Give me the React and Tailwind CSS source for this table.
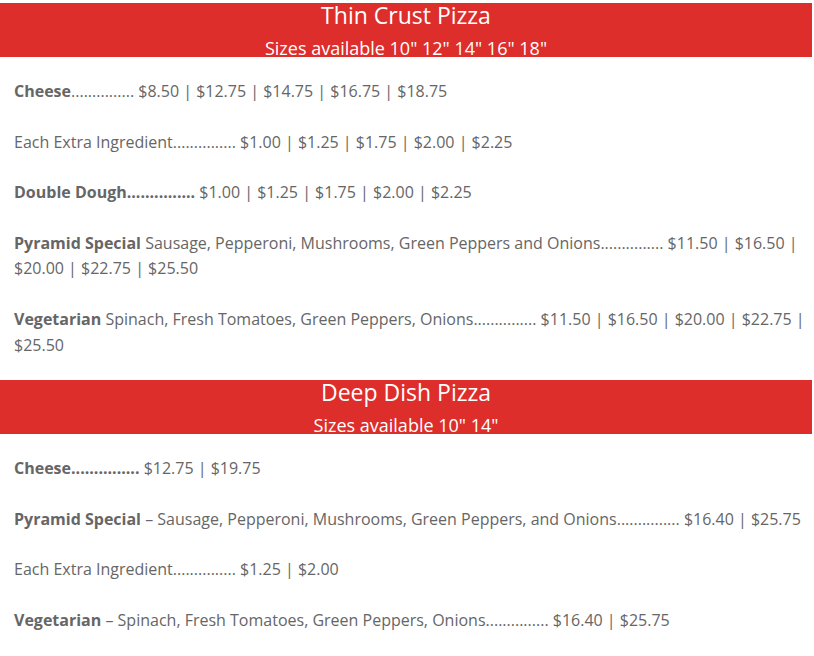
import React from "react";

const Bar = ({ title, sizes }) => (
  <div className="h-[54px] bg-[#dd2e2b] text-white text-center flex flex-col">
    <div className="text-[23px] leading-[24px]">{title}</div>
    <div className="text-[18px] leading-[20px] mt-[11px]">{sizes}</div>
  </div>
);

const D = "...............";

export default function App() {
  return (
    <div className="w-[812px] bg-white pt-[3px] text-[#666666]" style={{ fontFamily: '"Open Sans", sans-serif' }}>
      <Bar title="Thin Crust Pizza" sizes={'Sizes available 10" 12" 14" 16" 18"'} />
      <div className="pl-[14px] pr-[2px] pt-[22px] pb-[21.6px] flex flex-col gap-[25px] text-[16px] leading-[25.6px]">
        <p><b>Cheese</b>{D} $8.50 | $12.75 | $14.75 | $16.75 | $18.75</p>
        <p>Each Extra Ingredient{D} $1.00 | $1.25 | $1.75 | $2.00 | $2.25</p>
        <p><b>Double Dough{D}</b> $1.00 | $1.25 | $1.75 | $2.00 | $2.25</p>
        <p><b>Pyramid Special</b> Sausage, Pepperoni, Mushrooms, Green Peppers and Onions{D} $11.50 | $16.50 | $20.00 | $22.75 | $25.50</p>
        <p><b>Vegetarian</b> Spinach, Fresh Tomatoes, Green Peppers, Onions{D} $11.50 | $16.50 | $20.00 | $22.75 | $25.50</p>
      </div>
      <Bar title="Deep Dish Pizza" sizes={'Sizes available 10" 14"'} />
      <div className="pl-[14px] pr-[2px] pt-[22.2px] pb-[23px] flex flex-col gap-[25px] text-[16px] leading-[25.6px]">
        <p><b>Cheese{D}</b> $12.75 | $19.75</p>
        <p><b>Pyramid Special</b> – Sausage, Pepperoni, Mushrooms, Green Peppers, and Onions{D} $16.40 | $25.75</p>
        <p>Each Extra Ingredient{D} $1.25 | $2.00</p>
        <p><b>Vegetarian</b> – Spinach, Fresh Tomatoes, Green Peppers, Onions{D} $16.40 | $25.75</p>
      </div>
    </div>
  );
}
